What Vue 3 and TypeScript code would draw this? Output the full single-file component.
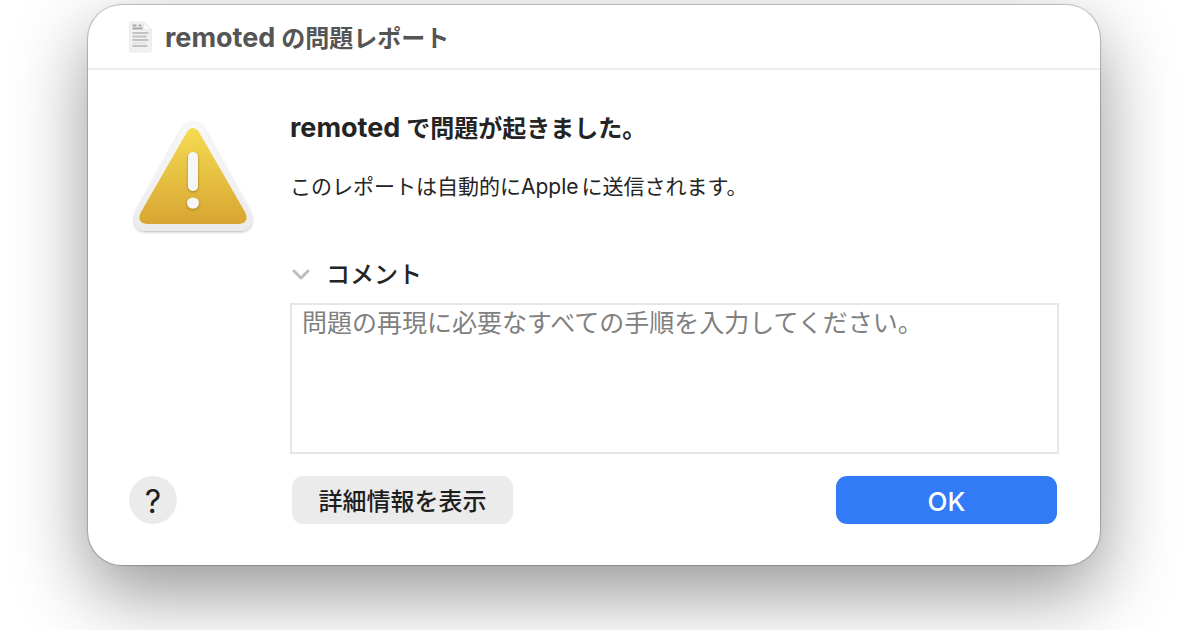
<script setup lang="ts">
import { ref } from 'vue'

const processName = 'remoted'
const vendor = 'Apple'
const comment = ref('')
const commentOpen = ref(true)
</script>

<template>
  <main class="desktop">
    <section class="window" role="dialog" aria-labelledby="window-title">
      <header class="titlebar">
        <svg class="doc-icon" viewBox="0 0 24 32" aria-hidden="true">
          <path d="M2 1h13l8 8v20a2 2 0 0 1-2 2H2a1 1 0 0 1-1-1V2a1 1 0 0 1 1-1z" fill="#f1f1f1" stroke="#ebebeb" />
          <path d="M15 1v6a2 2 0 0 0 2 2h6z" fill="#fafafa" stroke="#e6e6e6" />
          <path d="M4 4.500h4M10 4.500h3M4 7.500h10" stroke="#a8a8a8" stroke-width="2" />
          <path d="M4 12h16M4 15.500h14M4 19h16M4 25h15" stroke="#c2c2c2" stroke-width="2" />
          <path d="M4 22h13" stroke="#d6d6d6" stroke-width="1" />
        </svg>
        <h1 id="window-title" class="title"><span class="latin">{{ processName }}</span>の問題レポート</h1>
      </header>

      <div class="content">
        <svg class="warning" viewBox="0 0 128 124" aria-hidden="true">
          <defs>
            <linearGradient id="gold" x1="0" y1="0" x2="0" y2="1">
              <stop offset="0" stop-color="#f5dc52" />
              <stop offset="1" stop-color="#d8a532" />
            </linearGradient>
            <linearGradient id="rim" x1="0" y1="0" x2="0" y2="1">
              <stop offset="0" stop-color="#f8f8f8" />
              <stop offset="1" stop-color="#ebebeb" />
            </linearGradient>
            <filter id="soft" x="-20%" y="-20%" width="140%" height="150%">
              <feDropShadow dx="0" dy="1" stdDeviation="1.500" flood-color="#000" flood-opacity="0.300" />
            </filter>
          </defs>
          <path d="M53 10 Q64 -4 75 10 L121 92 Q127 111 111 112 H17 Q1 111 7 92 Z" fill="url(#rim)" filter="url(#soft)" />
          <path d="M58 13 Q64 5 70 13 L116 93 Q121 104 110 105 H18 Q7 104 12 93 Z" fill="url(#gold)" />
          <g fill="#f6f6f6" filter="url(#soft)">
            <rect x="59" y="33" width="10" height="39" rx="5" />
            <ellipse cx="64" cy="84" rx="6" ry="5.500" />
          </g>
        </svg>

        <div class="details">
          <h2 class="heading"><span class="latin">{{ processName }}</span>で問題が起きました。</h2>
          <p class="message">このレポートは自動的に<span class="latin">{{ vendor }}</span>に送信されます。</p>
          <div class="comment-head">
            <button class="disclosure" type="button" aria-label="コメントの表示切り替え" :aria-expanded="commentOpen" @click="commentOpen = !commentOpen">
              <svg viewBox="0 0 18 12" aria-hidden="true">
                <path d="M2 2l7 7 7-7" fill="none" stroke="#bdbdbd" stroke-width="3" stroke-linecap="round" stroke-linejoin="round" />
              </svg>
            </button>
            <label for="comment">コメント</label>
          </div>
          <textarea v-show="commentOpen" id="comment" v-model="comment" class="comment" placeholder="問題の再現に必要なすべての手順を入力してください。"></textarea>
        </div>

        <button class="help" type="button" aria-label="ヘルプ">?</button>
        <div class="actions">
          <button class="button" type="button">詳細情報を表示</button>
          <button class="button primary" type="button">OK</button>
        </div>
      </div>
    </section>
  </main>
</template>

<style>
body {
  margin: 0;
  background: #fff;
}
</style>

<style scoped>
* {
  box-sizing: border-box;
}

.desktop {
  min-height: 100vh;
  padding: 5px 100px 64px 88px;
  overflow: hidden;
  font-family: Inter, "Noto Sans CJK JP", sans-serif;
  color: #242424;
}

.window {
  border-radius: 34px;
  background: #fff;
  box-shadow:
    0 0 1px 1px rgba(0, 0, 0, 0.22),
    0 28px 74px rgba(0, 0, 0, 0.42);
}

.titlebar {
  display: flex;
  align-items: center;
  gap: 12px;
  height: 65px;
  padding: 0 40px;
  border-bottom: 2px solid #ececec;
}

.doc-icon {
  width: 25px;
  height: 32px;
}

.title,
.heading,
.message {
  margin: 0;
  white-space: nowrap;
}

.title {
  padding-top: 4px;
  font-size: 24px;
  line-height: 36px;
  font-weight: 700;
  color: #555;
}

.title .latin,
.heading .latin {
  margin-right: 6px;
  font-size: 27px;
}

.content {
  display: grid;
  grid-template-columns: 128px 1fr;
  column-gap: 33px;
  row-gap: 22px;
  padding: 40px 41px 41px 41px;
}

.warning {
  width: 128px;
  height: 124px;
  margin-top: 9px;
}

.heading {
  font-size: 24px;
  line-height: 36px;
  font-weight: 700;
}

.message {
  margin-top: 24px;
  font-size: 21px;
  line-height: 32px;
}

.message .latin {
  margin-right: 3px;
}

.comment-head {
  display: flex;
  align-items: center;
  gap: 14px;
  margin-top: 54px;
  font-size: 24px;
  line-height: 36px;
  font-weight: 500;
}

.disclosure {
  display: flex;
  padding: 0 2px;
  border: 0;
  background: none;
}

.disclosure svg {
  width: 18px;
  height: 12px;
}

.comment {
  display: block;
  width: 100%;
  height: 151px;
  margin-top: 10px;
  padding: 0 10px;
  border: 2px solid #e6e6e6;
  outline: 0;
  resize: none;
  background: #fff;
  font: 25px/36px Inter, "Noto Sans CJK JP", sans-serif;
  color: #242424;
}

.comment::placeholder {
  color: #808080;
  opacity: 1;
}

.help,
.button {
  height: 48px;
  padding: 3px 0 0;
  border: 0;
  background: #ebebeb;
  font: 500 24px/36px Inter, "Noto Sans CJK JP", sans-serif;
  color: #1e1e1e;
}

.help {
  width: 48px;
  border-radius: 50%;
  font-size: 32px;
  font-weight: 400;
}

.actions {
  display: flex;
  justify-content: space-between;
  padding: 0 2px;
}

.button {
  width: 221px;
  border-radius: 11px;
}

.primary {
  background: #317cf6;
  color: #fff;
  font-size: 26px;
}
</style>
